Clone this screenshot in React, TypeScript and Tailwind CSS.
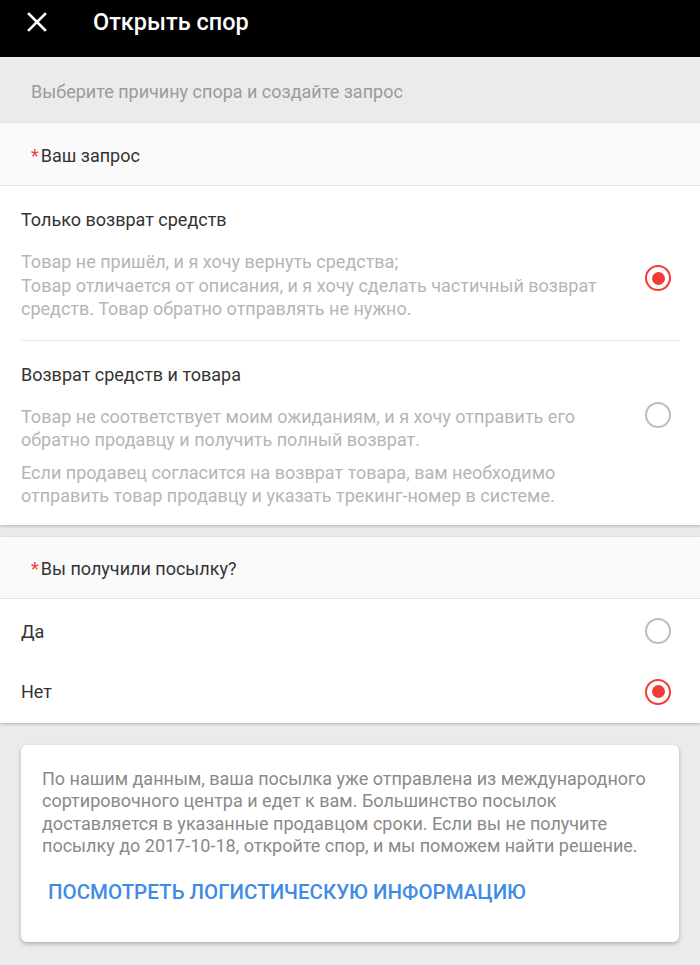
import React from "react";

function Radio({ checked }: { checked: boolean }) {
  return checked ? (
    <div className="w-[26px] h-[26px] rounded-full border-[2.5px] border-[#f23b35] flex items-center justify-center shrink-0">
      <div className="w-[13px] h-[13px] rounded-full bg-[#f23b35]" />
    </div>
  ) : (
    <div className="w-[26px] h-[26px] rounded-full border-[2px] border-[#bdbdbd] shrink-0" />
  );
}

export default function App() {
  return (
    <div className="w-[700px] min-h-[965px] bg-[#ebebeb] font-['Roboto',sans-serif]">
      <div className="h-[57px] bg-black flex items-start pt-[11px]">
        <svg width="20" height="20" viewBox="0 0 20 20" className="ml-[27px] mt-[1px]">
          <path d="M2 2 L18 18 M18 2 L2 18" stroke="white" strokeWidth="2.6" strokeLinecap="square" />
        </svg>
        <div className="ml-[46px] text-white text-[23.5px] font-medium leading-[22px]">Открыть спор</div>
      </div>
      <div className="h-[66px] flex items-center px-[31px] pt-[3px] text-[18px] text-[#9b9b9b]">
        Выберите причину спора и создайте запрос
      </div>

      <div className="bg-white shadow-[0_1px_3px_rgba(0,0,0,0.25)]">
        <div className="h-[63px] bg-[#fafafa] border-b border-[#e3e3e3] flex items-center px-[31px] pt-[3px] text-[18px] text-[#333]">
          <span className="text-[#f23b35] mr-[2px]">*</span>Ваш запрос
        </div>
        <div className="px-[21px]">
          <div className="pt-[22px] pb-[19px] border-b border-[#e6e6e6]">
            <div className="text-[18px] leading-[24px] text-[#333]">Только возврат средств</div>
            <div className="flex items-center mt-[18px]">
              <div className="flex-1 text-[18px] leading-[23.5px] text-[#b5b5b5] pr-[40px]">
                Товар не пришёл, и я хочу вернуть средства;
                <br />
                Товар отличается от описания, и я хочу сделать частичный возврат средств. Товар обратно отправлять не нужно.
              </div>
              <div className="mr-[8px] mb-[14px]">
                <Radio checked />
              </div>
            </div>
          </div>
          <div className="pt-[22px] pb-[18px]">
            <div className="text-[18px] leading-[24px] text-[#333]">Возврат средств и товара</div>
            <div className="flex mt-[18px]">
              <div className="flex-1 text-[18px] leading-[23px] text-[#b5b5b5] pr-[40px]">
                <div>Товар не соответствует моим ожиданиям, и я хочу отправить его обратно продавцу и получить полный возврат.</div>
                <div className="mt-[10px]">Если продавец согласится на возврат товара, вам необходимо отправить товар продавцу и указать трекинг-номер в системе.</div>
              </div>
              <div className="mr-[8px] mt-[-3px]">
                <Radio checked={false} />
              </div>
            </div>
          </div>
        </div>
      </div>

      <div className="mt-[12px] bg-white shadow-[0_1px_3px_rgba(0,0,0,0.25)]">
        <div className="h-[62px] bg-[#fafafa] border-b border-[#e3e3e3] flex items-center px-[31px] pt-[3px] text-[18px] text-[#333]">
          <span className="text-[#f23b35] mr-[2px]">*</span>Вы получили посылку?
        </div>
        <div className="px-[21px]">
          <div className="h-[62px] flex items-center justify-between pt-[3px]">
            <span className="text-[18px] text-[#333]">Да</span>
            <div className="mr-[8px]"><Radio checked={false} /></div>
          </div>
          <div className="h-[62px] flex items-center justify-between">
            <span className="text-[18px] text-[#333]">Нет</span>
            <div className="mr-[8px]"><Radio checked /></div>
          </div>
        </div>
      </div>

      <div className="mx-[21px] mt-[22px] bg-white rounded-[6px] shadow-[0_2px_4px_rgba(0,0,0,0.25)] px-[21px] pt-[23px] pb-[38px]">
        <div className="text-[18px] leading-[22.5px] text-[#8a8a8a]">
          По нашим данным, ваша посылка уже отправлена из международного сортировочного центра и едет к вам. Большинство посылок доставляется в указанные продавцом сроки. Если вы не получите посылку до 2017-10-18, откройте спор, и мы поможем найти решение.
        </div>
        <div className="mt-[22px] ml-[6px] text-[20.5px] font-medium text-[#3f8ce6] leading-[24px]">
          ПОСМОТРЕТЬ ЛОГИСТИЧЕСКУЮ ИНФОРМАЦИЮ
        </div>
      </div>
    </div>
  );
}
